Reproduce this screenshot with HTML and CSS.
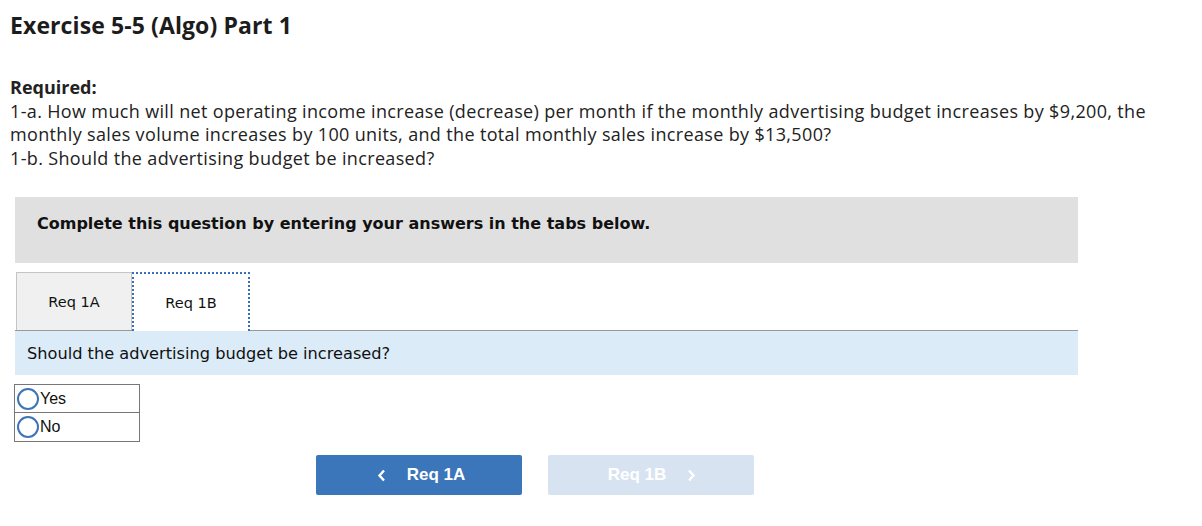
FILE: index.html
```html
<!DOCTYPE html>
<html>
<head>
<meta charset="utf-8">
<link rel="stylesheet" href="styles.css">
</head>
<body>
<h1 class="title">Exercise 5-5 (Algo) Part 1</h1>
<div class="required">
  <p class="req-label">Required:</p>
  <p>1-a. How much will net operating income increase (decrease) per month if the monthly advertising budget increases by $9,200, the<br>monthly sales volume increases by 100 units, and the total monthly sales increase by $13,500?</p>
  <p>1-b. Should the advertising budget be increased?</p>
</div>
<div class="question">
  <div class="banner">Complete this question by entering your answers in the tabs below.</div>
  <div class="tabs">
    <div class="tab">Req 1A</div>
    <div class="tab active">Req 1B</div>
  </div>
  <div class="panel">Should the advertising budget be increased?</div>
  <table class="choices">
    <tr><td><span class="radio"></span>Yes</td></tr>
    <tr><td><span class="radio"></span>No</td></tr>
  </table>
  <div class="nav">
    <button class="btn prev"><svg class="chev" width="9" height="13" viewBox="0 0 9 13"><polyline points="7,1.5 2.5,6.5 7,11.5" fill="none" stroke="#fff" stroke-width="2.4"/></svg><span>Req 1A</span></button>
    <button class="btn next" disabled><span>Req 1B</span><svg class="chev" width="9" height="13" viewBox="0 0 9 13"><polyline points="2,1.5 6.5,6.5 2,11.5" fill="none" stroke="#fff" stroke-width="2.4"/></svg></button>
  </div>
</div>
</body>
</html>
```
FILE: styles.css
```css
html, body {
  margin: 0;
  padding: 0;
  background: #fff;
}
body {
  padding: 0 10px;
  font-family: "Open Sans", "Liberation Sans", sans-serif;
  color: #222;
}
.title {
  margin: 11px 0 0 0;
  font-size: 23px;
  line-height: 28px;
  letter-spacing: 0.1px;
  font-weight: 700;
  color: #1c1c1c;
}
.required {
  margin-top: 37px;
  font-size: 18px;
  line-height: 23.5px;
  letter-spacing: 0.35px;
}
.required p {
  margin: 0;
}
.req-label {
  font-weight: 700;
  letter-spacing: 0;
}
.question {
  margin: 27px 0 0 5px;
  width: 1063px;
}
.banner {
  background: #e0e0e0;
  height: 66px;
  box-sizing: border-box;
  padding: 17px 0 0 22px;
  line-height: 20px;
  font-family: "DejaVu Sans", Verdana, sans-serif;
  font-weight: 700;
  font-size: 16px;
  color: #111;
}
.tabs {
  margin-top: 9px;
  display: flex;
  border-bottom: 1px solid #999;
  padding-left: 1px;
}
.tab {
  width: 116px;
  height: 58px;
  box-sizing: border-box;
  display: flex;
  align-items: center;
  justify-content: center;
  font-family: "DejaVu Sans", Verdana, sans-serif;
  font-size: 14.5px;
  color: #111;
  background: #f0f0f0;
  border: 1px solid #c4c4c4;
  border-bottom: none;
}
.tab.active {
  background: #fff;
  border: 2px dotted #3a6fb7;
  border-bottom: none;
  width: 118px;
  margin-bottom: -1px;
  height: 59px;
}
.panel {
  background: #dbecf8;
  height: 44px;
  padding-left: 12px;
  display: flex;
  align-items: center;
  font-family: "DejaVu Sans", Verdana, sans-serif;
  font-size: 16.2px;
  color: #111;
}
.choices {
  margin-top: 9px;
  margin-left: -1px;
  border-collapse: collapse;
}
.choices td {
  border: 1px solid #777;
  width: 126px;
  height: 29px;
  box-sizing: border-box;
  padding: 0 0 0 2px;
  font-family: "Liberation Sans", Arial, sans-serif;
  font-size: 16px;
  color: #111;
  display: flex;
  align-items: center;
}
.choices tr + tr td {
  border-top: none;
}
.radio {
  display: inline-block;
  width: 18px;
  height: 18px;
  border: 2px solid #3d74b8;
  border-radius: 50%;
  margin-right: 1px;
}
.nav {
  margin-top: 13px;
  display: flex;
  gap: 26px;
  padding-left: 301px;
}
.btn {
  width: 206px;
  height: 40px;
  border: none;
  border-radius: 2px;
  display: flex;
  align-items: center;
  justify-content: center;
  gap: 21px;
  font-family: "Liberation Sans", Arial, sans-serif;
  font-weight: 700;
  font-size: 17px;
  color: #fff;
  padding: 0 0 0 4px;
}
.btn.next {
  padding: 0 0 0 2px;
}
.btn.prev {
  background: #3a76b9;
}
.btn.next {
  background: #d7e3f1;
}
.chev {
  display: block;
}
```
